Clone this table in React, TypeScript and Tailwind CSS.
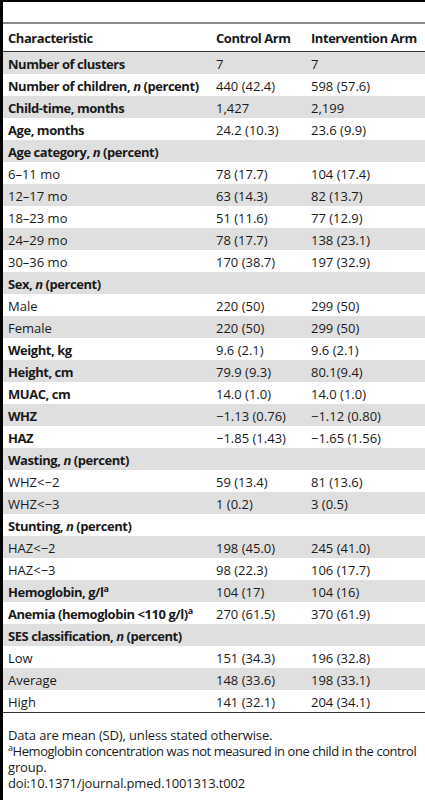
import React from "react";

type Row = { label: React.ReactNode; bold?: boolean; c?: string; i?: string };

const N = () => <i>n</i>;
const Sup = () => <span className="text-[9px] leading-none relative -top-[5px] font-bold">a</span>;

const rows: Row[] = [
  { label: "Number of clusters", bold: true, c: "7", i: "7" },
  { label: <>Number of children, <N /> (percent)</>, bold: true, c: "440 (42.4)", i: "598 (57.6)" },
  { label: "Child-time, months", bold: true, c: "1,427", i: "2,199" },
  { label: "Age, months", bold: true, c: "24.2 (10.3)", i: "23.6 (9.9)" },
  { label: <>Age category, <N /> (percent)</>, bold: true },
  { label: "6–11 mo", c: "78 (17.7)", i: "104 (17.4)" },
  { label: "12–17 mo", c: "63 (14.3)", i: "82 (13.7)" },
  { label: "18–23 mo", c: "51 (11.6)", i: "77 (12.9)" },
  { label: "24–29 mo", c: "78 (17.7)", i: "138 (23.1)" },
  { label: "30–36 mo", c: "170 (38.7)", i: "197 (32.9)" },
  { label: <>Sex, <N /> (percent)</>, bold: true },
  { label: "Male", c: "220 (50)", i: "299 (50)" },
  { label: "Female", c: "220 (50)", i: "299 (50)" },
  { label: "Weight, kg", bold: true, c: "9.6 (2.1)", i: "9.6 (2.1)" },
  { label: "Height, cm", bold: true, c: "79.9 (9.3)", i: "80.1(9.4)" },
  { label: "MUAC, cm", bold: true, c: "14.0 (1.0)", i: "14.0 (1.0)" },
  { label: "WHZ", bold: true, c: "−1.13 (0.76)", i: "−1.12 (0.80)" },
  { label: "HAZ", bold: true, c: "−1.85 (1.43)", i: "−1.65 (1.56)" },
  { label: <>Wasting, <N /> (percent)</>, bold: true },
  { label: "WHZ<−2", c: "59 (13.4)", i: "81 (13.6)" },
  { label: "WHZ<−3", c: "1 (0.2)", i: "3 (0.5)" },
  { label: <>Stunting, <N /> (percent)</>, bold: true },
  { label: "HAZ<−2", c: "198 (45.0)", i: "245 (41.0)" },
  { label: "HAZ<−3", c: "98 (22.3)", i: "106 (17.7)" },
  { label: <>Hemoglobin, g/l<Sup /></>, bold: true, c: "104 (17)", i: "104 (16)" },
  { label: <>Anemia (hemoglobin &lt;110 g/l)<Sup /></>, bold: true, c: "270 (61.5)", i: "370 (61.9)" },
  { label: <>SES classification, <N /> (percent)</>, bold: true },
  { label: "Low", c: "151 (34.3)", i: "196 (32.8)" },
  { label: "Average", c: "148 (33.6)", i: "198 (33.1)" },
  { label: "High", c: "141 (32.1)", i: "204 (34.1)" },
];

export default function App() {
  return (
    <div
      className="w-[425px] h-[800px] bg-white border-l-[3px] border-black text-[#1a1a1a] text-[13px] leading-[22px]"
      style={{ fontFamily: '"Open Sans", "Noto Sans", Arial, sans-serif' }}
    >
      <div className="h-[2px] bg-black" />
      <div className="h-[20px]" />
      <div className="h-[2px] bg-[#8a8a8a]" />
      <div className="grid grid-cols-[213px_95px_1fr] h-[28px] items-center font-bold tracking-[-0.45px] border-b border-[#333]">
        <div className="pl-[5px]">Characteristic</div>
        <div>Control Arm</div>
        <div>Intervention Arm</div>
      </div>
      {rows.map((r, k) => (
        <div
          key={k}
          className={`grid grid-cols-[213px_95px_1fr] h-[22px] items-center pt-px ${k % 2 === 0 ? "bg-[#dfdfdf]" : "bg-white"}`}
        >
          <div className={`pl-[5px] whitespace-nowrap ${r.bold ? "font-bold tracking-[-0.45px]" : ""}`}>{r.label}</div>
          <div className="whitespace-nowrap">{r.c ?? ""}</div>
          <div className="whitespace-nowrap">{r.i ?? ""}</div>
        </div>
      ))}
      <div className="h-px bg-[#333]" />
      <div className="pl-[5px] pt-[14px] text-[13px] leading-[16px]">
        <div className="tracking-[-0.15px]">Data are mean (SD), unless stated otherwise.</div>
        <div className="whitespace-nowrap tracking-[-0.45px]">
          <span className="inline-block text-[9px] leading-none align-top">a</span>Hemoglobin concentration was not measured in one child in the control
        </div>
        <div className="tracking-[-0.15px]">group.</div>
        <div className="tracking-[-0.15px]">doi:10.1371/journal.pmed.1001313.t002</div>
      </div>
    </div>
  );
}
